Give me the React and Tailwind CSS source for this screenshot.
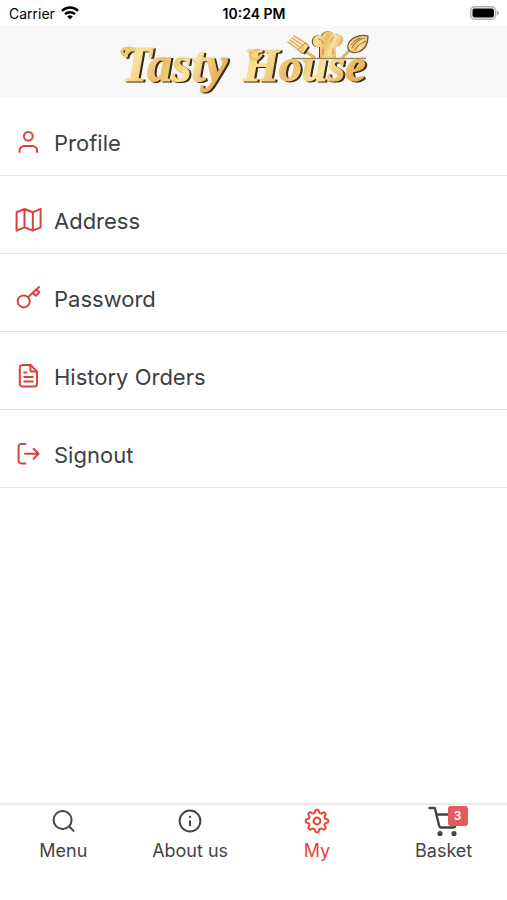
const MenuIcon = ({ children }) => (
  <svg
    viewBox="0 0 28 28"
    className="size-7 shrink-0 text-[#d8413c]"
    fill="none"
    stroke="currentColor"
    strokeWidth="2"
    strokeLinecap="round"
    strokeLinejoin="round"
    aria-hidden="true"
  >
    {children}
  </svg>
);

const TabIcon = ({ children }) => (
  <svg
    viewBox="0 0 32 32"
    className="size-8"
    fill="none"
    stroke="currentColor"
    strokeWidth="2"
    strokeLinecap="round"
    strokeLinejoin="round"
    aria-hidden="true"
  >
    {children}
  </svg>
);

// gear outline with eight soft teeth
const gearPoints = Array.from({ length: 96 }, (_, i) => {
  const angle = (i / 96) * Math.PI * 2;
  const wave = Math.cos(angle * 8);
  const radius = 9.8 + 1.5 * Math.tanh(wave * 2);
  return `${(16 + radius * Math.sin(angle)).toFixed(2)},${(16 - radius * Math.cos(angle)).toFixed(2)}`;
}).join(" ");

const menuItems = [
  {
    label: "Profile",
    icon: (
      <>
        <circle cx="14.3" cy="7.3" r="4.4" />
        <path d="M5.6 23v-1.5a4.6 4.6 0 0 1 4.6-4.6h8.2a4.6 4.6 0 0 1 4.6 4.6V23" />
      </>
    ),
  },
  {
    label: "Address",
    icon: (
      <path d="M2.6 5.2 10.5 2l8.3 3.3 7.8-3.5v18.6l-7.8 3.2-8.3-3.2-7.9 3.2ZM10.5 2v18.4M18.8 5.3v18.3" />
    ),
  },
  {
    label: "Password",
    icon: (
      <>
        <circle cx="9.7" cy="16.4" r="6" />
        <path d="M14 12.2 25 2M19.3 8.4l2.6 2.4 3.4-3.4-2.5-2.7" />
      </>
    ),
  },
  {
    label: "History Orders",
    icon: (
      <>
        <path d="M16.6 2H8.4A2.6 2.6 0 0 0 5.8 4.6v16.2a2.6 2.6 0 0 0 2.6 2.6h12a2.6 2.6 0 0 0 2.6-2.6V8.6Z" />
        <path d="M16.4 2.2v4.6a1.8 1.8 0 0 0 1.8 1.8h4.6" />
        <path d="M10.2 9.6h2M10.2 14h8.6M10.2 18.4h8.6" />
      </>
    ),
  },
  {
    label: "Signout",
    icon: (
      <>
        <path d="M11.4 3H7.2a2.6 2.6 0 0 0-2.6 2.6v14.2a2.6 2.6 0 0 0 2.6 2.6h4.2" />
        <path d="M11 12.7h13.6M19.6 7.7l5 5-5 5" />
      </>
    ),
  },
];

const Logo = () => (
  <svg viewBox="0 0 268 64" className="h-16 w-67" role="img" aria-label="Tasty House">
    <defs>
      <linearGradient id="gold" x1="0" y1="0" x2="1" y2="0.3">
        <stop offset="0" stopColor="#efc66c" />
        <stop offset="0.25" stopColor="#fae09a" />
        <stop offset="0.5" stopColor="#eabd66" />
        <stop offset="0.75" stopColor="#fae3a0" />
        <stop offset="1" stopColor="#e5b55f" />
      </linearGradient>
    </defs>

    {/* lettering */}
    <g
      className="drop-shadow-[2px_1px_0_#3b2a12]"
      fill="url(#gold)"
      stroke="url(#gold)"
      strokeWidth="1.2"
      fontFamily="'Liberation Serif', serif"
      fontWeight="700"
      fontStyle="italic"
    >
      <text x="1" y="51" fontSize="50">Tasty</text>
      <text x="123" y="51" fontSize="46">House</text>
      {/* swashes on the two capitals */}
      <path d="M10 20c-4 6-9 5-8 1 1-3 6-4 12-2" fill="none" strokeWidth="3" stroke="#efc66c" strokeLinecap="round" />
      <path d="M137 20c-7 1-9 7-4 9 3 1 6-1 8-4" fill="none" strokeWidth="3" stroke="#efc66c" strokeLinecap="round" />
    </g>

    {/* fork */}
    <g fill="none" stroke="#dfb566" strokeWidth="1.6" strokeLinecap="round">
      <path d="m174 6 13 8M172 8l12 8M170 10l11 8M168 12l11 8" />
      <path d="m186 22 8 5" strokeWidth="3" />
    </g>
    <path d="m185 13 4 3-6 8-5-4Z" fill="url(#gold)" stroke="#a97d39" strokeWidth="0.8" />
    <path d="m189 17-5 7" stroke="#3b2a12" strokeWidth="2" />

    {/* chef hat */}
    <path
      className="drop-shadow-[-1px_0_0_#5b421d]"
      d="M200 28V17c-5 1-8-3-7-7 1-4 5-6 9-4 2-6 11-6 13-1 5-2 9 2 8 6-1 4-4 6-7 5v12Z"
      fill="url(#gold)"
    />
    <path d="M198 9c3 0 5 2 5 5M214 7c-2 1-3 3-3 5M203 19v6M213 18v7" fill="none" stroke="#b98b45" />

    {/* spoon */}
    <path d="m229 21-6 6" stroke="#dfb566" strokeWidth="3" strokeLinecap="round" />
    <path
      d="M248 6c-9-2-18 2-20 9-1 6 4 9 10 7 7-2 10-8 10-16Z"
      fill="url(#gold)"
      stroke="#75552a"
      strokeWidth="1.2"
    />
    <path d="M245 8c-6 1-11 5-13 10M246 11c-5 2-9 5-11 9M241 8c-5 1-8 4-10 7" fill="none" stroke="#8f6a33" />
    <path d="M172 28.5h74" stroke="#a48a58" strokeWidth="1.4" />
  </svg>
);

const StatusBar = () => (
  <div className="grid h-[26px] grid-cols-3 items-center pr-2 pl-[9px] text-[14px] text-black">
    <div className="flex items-center gap-[6px]">
      <span>Carrier</span>
      <svg viewBox="0 0 18 14" className="h-[14px] w-[18px]" fill="none" stroke="currentColor" strokeWidth="2.4" aria-hidden="true">
        <path d="M1 4.8a11.5 11.5 0 0 1 16 0M4 8.2a7.2 7.2 0 0 1 10 0" />
        <path d="m9 13.6-2.8-3a4 4 0 0 1 5.6 0Z" fill="currentColor" stroke="none" />
      </svg>
    </div>
    <span className="text-center font-semibold">10:24 PM</span>
    <svg viewBox="0 0 30 14" className="h-[14px] w-[30px] justify-self-end" aria-hidden="true">
      <rect x="1.7" y="0.7" width="25" height="12.6" rx="4" fill="#fff" stroke="#adadad" strokeWidth="1.4" />
      <rect x="3.5" y="2.5" width="21.500" height="9" rx="2" fill="#000" />
      <path d="M28 4.500c2.500 1 2.500 4 0 5Z" fill="#adadad" />
    </svg>
  </div>
);

const tabs = [
  {
    label: "Menu",
    icon: (
      <TabIcon>
        <circle cx="15.6" cy="15" r="9" />
        <path d="m22.200 21.500 4.300 4.400" />
      </TabIcon>
    ),
  },
  {
    label: "About us",
    icon: (
      <TabIcon>
        <circle cx="16" cy="16" r="10.400" />
        <path d="M16 15.500v5.500" strokeLinecap="butt" />
        <path d="M16 11.700v.2" />
      </TabIcon>
    ),
  },
  {
    label: "My",
    active: true,
    icon: (
      <TabIcon>
        <polygon points={gearPoints} />
        <circle cx="16" cy="16" r="3.400" />
      </TabIcon>
    ),
  },
  {
    label: "Basket",
    badge: 3,
    icon: (
      <TabIcon>
        <path d="M1.500 3h5.300l4.300 17.500a2.500 2.500 0 0 0 2.500 2H25a2.500 2.500 0 0 0 2.400-2L30 9.500H8.500" strokeWidth="2.400" />
        <circle cx="12" cy="28.500" r="1.600" fill="currentColor" />
        <circle cx="26" cy="28.500" r="1.600" fill="currentColor" />
      </TabIcon>
    ),
  },
];

const App = () => {
  return (
    <div className="flex min-h-screen flex-col bg-white font-['Inter',sans-serif] text-[#3c4043]">
      <StatusBar />

      <header className="flex h-[72px] items-center justify-center bg-[#f7f7f7]">
        <Logo />
      </header>

      <main className="flex-1">
        <ul>
          {menuItems.map((item) => (
            <li key={item.label} className="border-b border-[#e2e2e2]">
              <button type="button" className="flex w-full cursor-pointer items-center gap-3 pt-[31px] pb-[18px] pl-[14px] text-left text-[22px] leading-7">
                <MenuIcon>{item.icon}</MenuIcon>
                {item.label}
              </button>
            </li>
          ))}
        </ul>
      </main>

      <nav className="grid grid-cols-4 border-t-2 border-[#ebebeb] pb-[37px]">
        {tabs.map((tab) => (
          <a
            key={tab.label}
            href="#"
            aria-current={tab.active ? "page" : undefined}
            className={`flex flex-col items-center gap-[2px] text-[18px] leading-6 ${
              tab.active ? "text-[#ea4335]" : "text-[#444444]"
            }`}
          >
            <span className="relative">
              {tab.icon}
              {tab.badge && (
                <span className="absolute top-px -right-2 flex h-5 w-5 items-center justify-center rounded-[3px] bg-[#e35b5f] text-[12px] font-semibold text-white">
                  {tab.badge}
                </span>
              )}
            </span>
            {tab.label}
          </a>
        ))}
      </nav>
    </div>
  );
};

export default App;
